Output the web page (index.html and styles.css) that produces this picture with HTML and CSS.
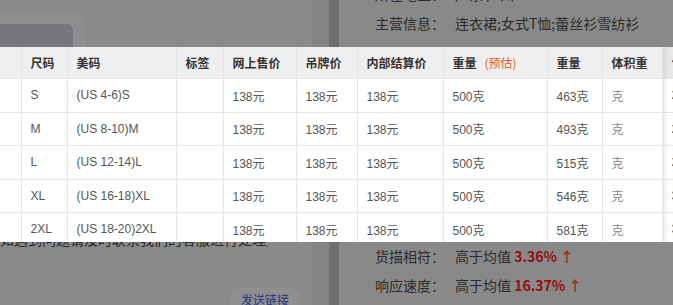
FILE: index.html
```html
<!DOCTYPE html>
<html lang="zh">
<head>
<meta charset="utf-8">
<link rel="stylesheet" href="styles.css">
</head>
<body>
<div class="page">
  <div class="left">
    <div class="card-outer"><div class="card-inner"></div></div>
    <div class="left-spacer"></div>
    <div class="left-text">如遇到问题请及时联系我们的客服进行处理并获取最新的商品信息</div>
    <div class="left-actions"><span class="send-btn">发送链接</span></div>
  </div>
  <div class="track"></div>
  <div class="gutter"></div>
  <div class="right">
    <div class="info-row"><span class="label">所在地区：</span><span class="value">广东 广州</span></div>
    <div class="info-row"><span class="label">主营信息：</span><span class="value">连衣裙;女式T恤;蕾丝衫雪纺衫</span></div>
    <div class="right-spacer"></div>
    <div class="info-row"><span class="label">货描相符：</span><span class="value">高于均值 <b class="num">3.36%</b> <span class="arrow">↑</span></span></div>
    <div class="info-row"><span class="label">响应速度：</span><span class="value">高于均值 <b class="num">16.37%</b> <span class="arrow">↑</span></span></div>
  </div>
</div>

<div class="sku-pop">
  <table class="sku">
    <colgroup>
      <col class="w21"><col class="w46"><col class="w109"><col class="w47"><col class="w73"><col class="w61"><col class="w86"><col class="w104"><col class="w55"><col class="w60"><col class="w90">
    </colgroup>
    <thead>
      <tr>
        <th class="first"></th><th>尺码</th><th>美码</th><th>标签</th><th>网上售价</th><th>吊牌价</th><th>内部结算价</th><th>重量<span class="est">(预估)</span></th><th>重量</th><th>体积重</th><th class="fixed">包装尺寸</th>
      </tr>
    </thead>
    <tbody>
      <tr><td class="first"></td><td>S</td><td>(US 4-6)S</td><td></td><td>138元</td><td>138元</td><td>138元</td><td>500克</td><td>463克</td><td class="muted">克</td><td class="fixed">20*15*3</td></tr>
      <tr><td class="first"></td><td>M</td><td>(US 8-10)M</td><td></td><td>138元</td><td>138元</td><td>138元</td><td>500克</td><td>493克</td><td class="muted">克</td><td class="fixed">20*15*3</td></tr>
      <tr><td class="first"></td><td>L</td><td>(US 12-14)L</td><td></td><td>138元</td><td>138元</td><td>138元</td><td>500克</td><td>515克</td><td class="muted">克</td><td class="fixed">20*15*3</td></tr>
      <tr><td class="first"></td><td>XL</td><td>(US 16-18)XL</td><td></td><td>138元</td><td>138元</td><td>138元</td><td>500克</td><td>546克</td><td class="muted">克</td><td class="fixed">30*20*3</td></tr>
      <tr><td class="first"></td><td>2XL</td><td>(US 18-20)2XL</td><td></td><td>138元</td><td>138元</td><td>138元</td><td>500克</td><td>581克</td><td class="muted">克</td><td class="fixed">30*20*3</td></tr>
    </tbody>
  </table>
</div>
</body>
</html>
```

FILE: styles.css
```css
html, body {
  margin: 0;
  padding: 0;
}
body {
  width: 673px;
  height: 305px;
  overflow: hidden;
  position: relative;
  background: #888888;
  font-family: "Liberation Sans", "Noto Sans CJK SC", sans-serif;
}

.page {
  display: flex;
  height: 305px;
}

.left {
  width: 312px;
  background: #8a8a8a;
  display: flex;
  flex-direction: column;
}
.card-outer {
  margin-top: 12px;
  width: 86px;
  height: 60px;
  flex-shrink: 0;
  background: #8e8e8e;
  border-radius: 0 9px 0 0;
  padding-top: 12px;
  box-sizing: border-box;
}
.card-inner {
  width: 73px;
  height: 40px;
  background: #76777c;
  border-radius: 0 6px 0 0;
}
.left-spacer {
  height: 157px;
  flex-shrink: 0;
}
.left-text {
  font-family: "Noto Sans CJK SC", sans-serif;
  font-size: 14px;
  line-height: 20px;
  color: #262626;
  white-space: nowrap;
  overflow: hidden;
  width: 268px;
  flex-shrink: 0;
}
.left-actions {
  display: flex;
  justify-content: flex-end;
  padding-right: 11px;
  margin-top: 39px;
  flex-shrink: 0;
}
.send-btn {
  font-family: "Noto Sans CJK SC", sans-serif;
  font-size: 12px;
  line-height: 24px;
  height: 24px;
  padding: 0 12px;
  border-radius: 12px;
  background: #8f8f8f;
  color: #2a347e;
}

.track {
  width: 17px;
  background: #848484;
}
.gutter {
  width: 10px;
  background: #6e6e6e;
}

.right {
  flex: 1;
  background: #898989;
  padding-left: 36px;
  display: flex;
  flex-direction: column;
  font-family: "Noto Sans CJK SC", sans-serif;
  font-size: 14px;
  color: #2b2b2b;
}
.info-row {
  display: flex;
  height: 29px;
  line-height: 29px;
  white-space: nowrap;
  flex-shrink: 0;
}
.info-row:first-child {
  margin-top: -20px;
}
.label {
  width: 80px;
}
.num {
  color: #940f0f;
  font-weight: bold;
  font-family: "Noto Sans CJK SC", sans-serif;
}
.arrow {
  color: #a3300e;
  font-weight: bold;
}
.right-spacer {
  height: 204px;
  flex-shrink: 0;
}

/* popover table */
.sku-pop {
  position: absolute;
  left: 0;
  top: 47px;
  width: 673px;
  height: 195px;
  overflow: hidden;
  background: #ffffff;
}
.sku {
  border-collapse: collapse;
  table-layout: fixed;
  width: 741px;
  font-size: 12px;
}
.w21 { width: 21px; }
.w46 { width: 46px; }
.w109 { width: 109px; }
.w47 { width: 47px; }
.w73 { width: 73px; }
.w61 { width: 61px; }
.w86 { width: 86px; }
.w104 { width: 104px; }
.w55 { width: 55px; }
.w60 { width: 60px; }
.w90 { width: 90px; }

.sku th, .sku td {
  border: 1px solid #e6e6e6;
  padding: 0 0 0 9px;
  text-align: left;
  white-space: nowrap;
  overflow: hidden;
}
.sku th {
  height: 31px;
  background: #efefef;
  color: #333333;
  font-weight: bold;
  font-family: "Noto Sans CJK SC", sans-serif;
}
.sku td {
  height: 32.5px;
  color: #555555;
  background: #ffffff;
}
.sku .first {
  border-left: none;
}
.sku thead th {
  border-top: none;
}
.sku td.muted {
  color: #888888;
  font-family: "Noto Sans CJK SC", sans-serif;
}
.est {
  color: #ee5a2a;
  font-weight: normal;
  margin-left: 8px;
}
.sku th.fixed {
  background: #e8e8e8;
  box-shadow: inset 6px 0 6px -5px rgba(0,0,0,0.12);
}
.sku td.fixed {
  box-shadow: inset 6px 0 6px -5px rgba(0,0,0,0.12);
}
```
